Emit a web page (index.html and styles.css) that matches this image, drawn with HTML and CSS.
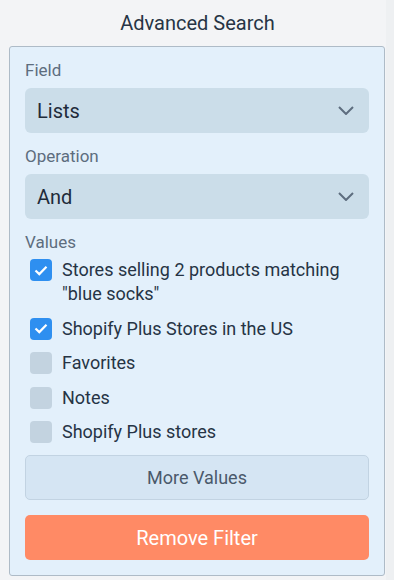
FILE: index.html
```html
<!DOCTYPE html>
<html lang="en">

<head>
    <meta charset="UTF-8">
    <meta name="viewport" content="width=device-width, initial-scale=1.0">
    <title>Advanced Search</title>
    <link rel="stylesheet" href="styles.css">
</head>

<body>
    <div class="page">
        <h2 class="title">Advanced Search</h2>
        <div class="filter">
            <div class="group">
                <label class="label">Field</label>
                <div class="select">
                    <span>Lists</span>
                    <svg class="chevron" width="16" height="9" viewBox="0 0 16 9"><path d="M1 1l7 7 7-7" fill="none" stroke="currentColor" stroke-width="2"/></svg>
                </div>
            </div>
            <div class="group">
                <label class="label">Operation</label>
                <div class="select">
                    <span>And</span>
                    <svg class="chevron" width="16" height="9" viewBox="0 0 16 9"><path d="M1 1l7 7 7-7" fill="none" stroke="currentColor" stroke-width="2"/></svg>
                </div>
            </div>
            <div class="group">
                <label class="label">Values</label>
                <ul class="values">
                    <li><span class="box checked"><svg width="14" height="11" viewBox="0 0 14 11"><path d="M1.5 5.5l3.8 3.6L12.5 1.8" fill="none" stroke="#fff" stroke-width="2.2"/></svg></span>Stores selling 2 products matching "blue socks"</li>
                    <li><span class="box checked"><svg width="14" height="11" viewBox="0 0 14 11"><path d="M1.5 5.5l3.8 3.6L12.5 1.8" fill="none" stroke="#fff" stroke-width="2.2"/></svg></span>Shopify Plus Stores in the US</li>
                    <li><span class="box"></span>Favorites</li>
                    <li><span class="box"></span>Notes</li>
                    <li><span class="box"></span>Shopify Plus stores</li>
                </ul>
            </div>
            <button class="btn more">More Values</button>
            <button class="btn remove">Remove Filter</button>
        </div>
    </div>
</body>

</html>
```

FILE: styles.css
```css
* {
    margin: 0;
    padding: 0;
    box-sizing: border-box;
}

html {
    background: #eef0f2;
}

body {
    font-family: Roboto, "Liberation Sans", sans-serif;
    color: #1f2b3a;
}

.page {
    width: 386px;
    min-height: 580px;
    background: #f3f4f6;
    padding: 0 0 4px 9px;
}

.title {
    font-size: 20px;
    font-weight: normal;
    line-height: 24px;
    text-align: center;
    padding: 11px 0 0;
    margin-bottom: 11px;
    color: #273445;
}

.filter {
    width: 376px;
    background: #e3f0fb;
    border: 1px solid #aebbc7;
    border-radius: 3px;
    padding: 11px 15px 15px;
}

.group {
    margin-bottom: 11px;
}

.label {
    display: block;
    font-size: 17px;
    line-height: 24px;
    color: #5d6d7e;
    margin-bottom: 6px;
}

.select {
    height: 45px;
    background: #cbdde9;
    border-radius: 6px;
    padding: 0 15px 0 12px;
    display: flex;
    align-items: center;
    justify-content: space-between;
    font-size: 20px;
    color: #1f2b3a;
}

.chevron {
    color: #5e6d7f;
}

.values {
    list-style: none;
    margin-top: -2px;
    padding-left: 5px;
    display: flex;
    flex-direction: column;
    gap: 10.5px;
}

.values li {
    display: flex;
    align-items: flex-start;
    gap: 10px;
    font-size: 18px;
    line-height: 24px;
    color: #263445;
}

.box {
    flex: none;
    width: 22px;
    height: 22px;
    margin-top: 1px;
    border-radius: 4px;
    background: #c3d3e0;
    display: flex;
    align-items: center;
    justify-content: center;
}

.box.checked {
    background: #2e8ff0;
}

.btn {
    display: block;
    width: 100%;
    height: 45px;
    border-radius: 5px;
    font-family: inherit;
    cursor: pointer;
}

.more {
    margin-top: 2px;
    background: #d5e5f3;
    border: 1px solid #c2d3e2;
    font-size: 18px;
    color: #4a596b;
}

.remove {
    margin-top: 15px;
    background: #ff8a65;
    border: none;
    font-size: 20px;
    color: #fff;
}
```
